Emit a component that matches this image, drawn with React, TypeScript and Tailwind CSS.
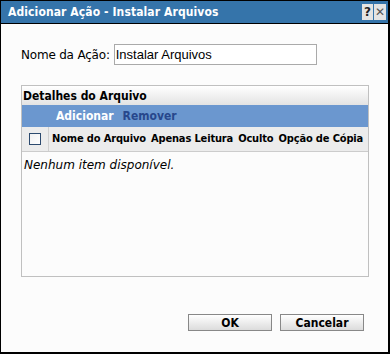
import React from "react";

const App = () => {
  return (
    <div className="w-[390px] h-[354px] bg-[#fcfcfc] border border-black border-r-2 border-b-2 flex flex-col font-['DejaVu_Sans',sans-serif] text-black">
      <div className="h-[23px] bg-[#3574aa] border-b border-black flex items-center pl-[7px] pr-[2px]">
        <span className="text-white font-bold text-[12px] font-['DejaVu_Sans_Condensed',sans-serif] tracking-[0.1px] flex-1 whitespace-nowrap">Adicionar Ação - Instalar Arquivos</span>
        <div className="flex gap-[1px]">
          <div className="w-[11px] h-[16px] bg-[#e4e4e4] flex items-center justify-center text-[12px] font-bold text-[#222]">?</div>
          <div className="w-[12px] h-[16px] bg-[#e4e4e4] flex items-center justify-center text-[12px] text-[#555]">✕</div>
        </div>
      </div>

      <div className="flex items-center pl-[20px] pt-[20px] gap-[4px]">
        <span className="text-[12px] tracking-[-0.2px]">Nome da Ação:</span>
        <div className="w-[203px] h-[21px] border border-[#aaa] bg-white flex items-center px-[1px] text-[13px] font-['Liberation_Sans',sans-serif]">Instalar Arquivos</div>
      </div>

      <div className="ml-[20px] mt-[20px] w-[348px] h-[192px] border border-[#c0c0c0] flex flex-col">
        <div className="h-[19px] bg-gradient-to-b from-white to-[#e3e3e3] flex items-center text-[12px] font-bold font-['DejaVu_Sans_Condensed',sans-serif] pl-[1px]">Detalhes do Arquivo</div>
        <div className="h-[22px] bg-[#6b97cf] flex items-center pl-[34px] gap-[9px] text-[12px] font-bold font-['DejaVu_Sans_Condensed',sans-serif]">
          <span className="text-white">Adicionar</span>
          <span className="text-[#27478c]">Remover</span>
        </div>
        <div className="h-[25px] bg-[#ececec] border-b border-[#ccc] flex items-center gap-[5px] text-[11px] font-bold font-['DejaVu_Sans_Condensed',sans-serif] tracking-[-0.15px] whitespace-nowrap">
          <div className="w-[27px] h-full border-r border-[#d0d0d0] flex items-center justify-center">
            <div className="w-[12px] h-[12px] border border-[#2c4a6e] bg-gradient-to-br from-[#f0f0f0] to-white" />
          </div>
          <span className="-ml-[2px]">Nome do Arquivo</span>
          <span>Apenas Leitura</span>
          <span>Oculto</span>
          <span>Opção de Cópia</span>
        </div>
        <div className="pl-[2px] pt-[4px] text-[12px] italic">Nenhum item disponível.</div>
      </div>

      <div className="flex justify-end gap-[8px] pr-[24px] mt-[37px]">
        <button className="w-[84px] h-[17px] border border-[#888] bg-gradient-to-b from-white to-[#dcdcdc] text-[12px] font-bold font-['DejaVu_Sans_Condensed',sans-serif] flex items-center justify-center">OK</button>
        <button className="w-[84px] h-[17px] border border-[#888] bg-gradient-to-b from-white to-[#dcdcdc] text-[12px] font-bold font-['DejaVu_Sans_Condensed',sans-serif] flex items-center justify-center">Cancelar</button>
      </div>
    </div>
  );
};

export default App;
